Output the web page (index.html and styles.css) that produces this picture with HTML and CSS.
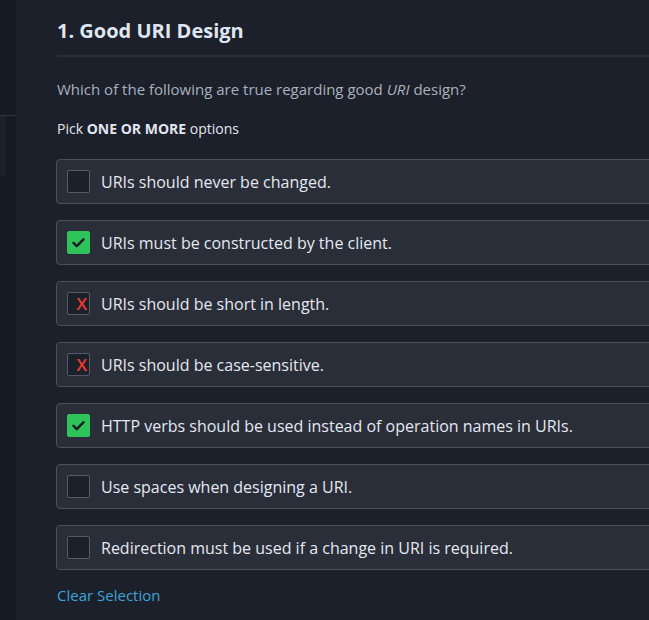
FILE: index.html
```html
<!DOCTYPE html>
<html>
<head>
<meta charset="utf-8">
<link rel="stylesheet" href="styles.css">
</head>
<body>
<aside class="sidebar">
  <div class="side-top"></div>
  <div class="side-panel"></div>
</aside>
<main class="main">
  <h1 class="title">1. Good URI Design</h1>
  <p class="question">Which of the following are true regarding good <em>URI</em> design?</p>
  <p class="pick">Pick <strong>ONE OR MORE</strong> options</p>
  <ul class="options">
    <li class="option"><span class="box"></span><span class="label">URIs should never be changed.</span></li>
    <li class="option"><span class="box checked"><svg viewBox="0 0 24 24" width="17" height="17"><path d="M5 12.5l4.5 4.5L19 7.5" fill="none" stroke="#1b1f27" stroke-width="3.6" stroke-linecap="round" stroke-linejoin="round"/></svg></span><span class="label">URIs must be constructed by the client.</span></li>
    <li class="option"><span class="box wrong">X</span><span class="label">URIs should be short in length.</span></li>
    <li class="option"><span class="box wrong">X</span><span class="label">URIs should be case-sensitive.</span></li>
    <li class="option"><span class="box checked"><svg viewBox="0 0 24 24" width="17" height="17"><path d="M5 12.5l4.5 4.5L19 7.5" fill="none" stroke="#1b1f27" stroke-width="3.6" stroke-linecap="round" stroke-linejoin="round"/></svg></span><span class="label">HTTP verbs should be used instead of operation names in URIs.</span></li>
    <li class="option"><span class="box"></span><span class="label">Use spaces when designing a URI.</span></li>
    <li class="option"><span class="box"></span><span class="label">Redirection must be used if a change in URI is required.</span></li>
  </ul>
  <a class="clear" href="#">Clear Selection</a>
</main>
</body>
</html>
```

FILE: styles.css
```css
html, body {
  margin: 0;
  padding: 0;
  height: 100%;
  overflow: hidden;
}
body {
  background: #1c202b;
  display: flex;
  font-family: "Open Sans", "Noto Sans", sans-serif;
  color: #e1e6ef;
}
.sidebar {
  width: 16px;
  flex: none;
  background: #151a24;
  display: flex;
  flex-direction: column;
}
.side-top {
  height: 115px;
  border-bottom: 1px solid #2c313c;
}
.side-panel {
  width: 6px;
  height: 60px;
  background: #1c212c;
}
.main {
  flex: 1;
  min-width: 0;
  padding-left: 41px;
  overflow: hidden;
}
.title {
  margin: 17px 0 0;
  font-size: 20px;
  font-weight: 700;
  line-height: 28px;
  color: #dfe6f2;
  width: 700px;
  padding-bottom: 10px;
  border-bottom: 2px solid #2a2e38;
}
.question {
  margin: 22px 0 0;
  font-size: 15px;
  line-height: 20px;
  color: #a9b1be;
}
.question em {
  font-style: italic;
}
.pick {
  margin: 20px 0 0;
  font-size: 14px;
  line-height: 20px;
  color: #e1e6ef;
}
.pick strong {
  font-weight: 700;
}
.options {
  list-style: none;
  margin: 20px 0 0 -1px;
  padding: 0;
  width: 700px;
  display: flex;
  flex-direction: column;
  gap: 16px;
}
.option {
  height: 43px;
  border: 1px solid #4b505c;
  border-radius: 4px;
  background: #2a2e39;
  display: flex;
  align-items: center;
  padding-left: 10px;
  gap: 11px;
}
.box {
  width: 21px;
  height: 21px;
  border: 1px solid #555a66;
  border-radius: 2px;
  background: #1c202b;
  flex: none;
  display: flex;
  align-items: center;
  justify-content: center;
}
.box.checked {
  background: #2ec45a;
  border-color: #2ec45a;
}
.box.wrong {
  color: #ef3b30;
  font-size: 17px;
  font-weight: 600;
  justify-content: flex-end;
  padding-right: 2px;
  width: 19px;
  line-height: 1;
}
.label {
  font-size: 16px;
  color: #e4e8f0;
  white-space: nowrap;
}
.clear {
  display: inline-block;
  margin-top: 15px;
  font-size: 15px;
  line-height: 20px;
  color: #3aa5d6;
  text-decoration: none;
}
```
